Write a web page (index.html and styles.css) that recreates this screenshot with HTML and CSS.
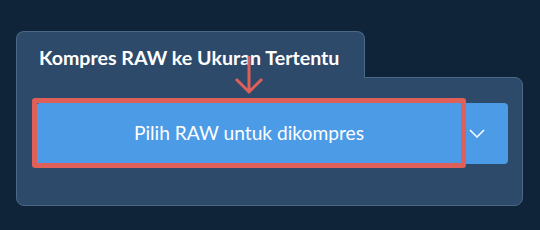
FILE: index.html
```html
<!DOCTYPE html>
<html lang="en">
<head>
    <meta charset="UTF-8">
    <title>Kompres RAW</title>
    <link rel="stylesheet" href="styles.css">
</head>
<body>
    <div class="card">
        <div class="card-tab">Kompres RAW ke Ukuran Tertentu</div>
        <div class="card-body">
            <div class="btn-group">
                <button class="btn-main">
                    Pilih RAW untuk dikompres
                    <span class="highlight"></span>
                </button>
                <button class="btn-drop">
                    <svg width="16" height="9" viewBox="0 0 16 9">
                        <path d="M1 1 L8 8 L15 1" fill="none" stroke="#fff" stroke-width="1.5"/>
                    </svg>
                </button>
            </div>
        </div>
        <!-- annotation arrow -->
        <svg class="pointer" width="32" height="42" viewBox="0 0 32 42">
            <path d="M16 1 V37 M3 24 L16 37 L29 24" fill="none" stroke="#df5f59" stroke-width="3"/>
        </svg>
    </div>
</body>
</html>
```

FILE: styles.css
```css
/* Page */
body, html {
    margin: 0;
    padding: 0;
    background: #0f2339;
    font-family: Lato, sans-serif;
}

body {
    padding: 31px 17px 0 16px;
}

/* Card with tab */
.card {
    position: relative;
    width: 507px;
}

.card-tab {
    position: relative;
    z-index: 2;
    width: 325px;
    height: 46px;
    padding-left: 22px;
    margin-bottom: -1px;
    box-sizing: content-box;
    background: #2d4a6a;
    border: 1px solid #4a6887;
    border-bottom: none;
    border-radius: 8px 8px 0 0;
    color: #ffffff;
    font-size: 19.6px;
    font-weight: 700;
    line-height: 51px;
}

.card-body {
    background: #2d4a6a;
    border: 1px solid #4a6887;
    border-radius: 0 8px 8px 8px;
    padding: 25px 14px 41px 19px;
}

/* Split button */
.btn-group {
    display: flex;
    height: 61px;
}

.btn-main {
    position: relative;
    width: 426px;
    border: none;
    background: #4c9be7;
    border-radius: 4px 0 0 4px;
    color: #ffffff;
    font-family: Lato, sans-serif;
    font-size: 19.2px;
    padding: 0 0 2px 0;
}

.btn-drop {
    flex: 1;
    border: none;
    background: #4c9be7;
    border-radius: 0 4px 4px 0;
    padding: 0 0 0 7px;
    text-align: left;
}

.btn-drop svg {
    display: block;
}

/* Annotation overlays */
.highlight {
    position: absolute;
    top: -5px;
    left: -4px;
    right: -4px;
    bottom: -4px;
    border: 5px solid #df5f59;
    border-radius: 3px;
}

.pointer {
    position: absolute;
    top: 24px;
    left: 217px;
    z-index: 3;
}
```
